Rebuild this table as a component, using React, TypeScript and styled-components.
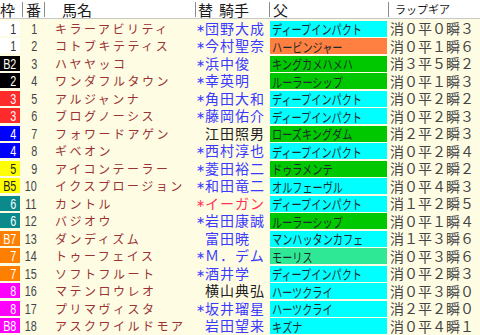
import React from 'react';
import styled, { createGlobalStyle } from 'styled-components';

const GlobalStyle = createGlobalStyle`
  html, body {
    margin: 0;
    padding: 0;
    background: #fffce4;
  }
`;

const COLS = '22px 22px 151px 74px 119px 92px';
const JP = `'Noto Sans CJK JP', 'Noto Sans', sans-serif`;

type Horse = {
  frame: string;
  waku: number;
  num: number;
  name: string;
  jockey: string;
  change: boolean;
  jockeyColor: 'blue' | 'black' | 'red';
  sire: string;
  sireColor: string;
  gear: string;
};

const wakuColors: Record<number, { bg: string; fg: string }> = {
  1: { bg: '#ffffff', fg: '#333333' },
  2: { bg: '#000000', fg: '#ffffff' },
  3: { bg: '#ff2a2a', fg: '#ffffff' },
  4: { bg: '#0000ff', fg: '#ffffff' },
  5: { bg: '#ffff00', fg: '#222222' },
  6: { bg: '#0a8a8a', fg: '#ffffff' },
  7: { bg: '#ff8000', fg: '#ffffff' },
  8: { bg: '#ff00ff', fg: '#ffffff' },
};

const CYAN = '#00ffff';
const GREEN = '#00c800';
const ORANGE = '#ff8040';
const MINT = '#2ee896';

const horses: Horse[] = [
  { frame: '1', waku: 1, num: 1, name: 'キラーアビリティ', jockey: '団野大成', change: true, jockeyColor: 'blue', sire: 'ディープインパクト', sireColor: CYAN, gear: '消０平０瞬３' },
  { frame: '1', waku: 1, num: 2, name: 'コトブキテティス', jockey: '今村聖奈', change: true, jockeyColor: 'blue', sire: 'ハービンジャー', sireColor: ORANGE, gear: '消０平１瞬６' },
  { frame: 'B2', waku: 2, num: 3, name: 'ハヤヤッコ', jockey: '浜中俊', change: true, jockeyColor: 'blue', sire: 'キングカメハメハ', sireColor: GREEN, gear: '消３平５瞬２' },
  { frame: '2', waku: 2, num: 4, name: 'ワンダフルタウン', jockey: '幸英明', change: true, jockeyColor: 'blue', sire: 'ルーラーシップ', sireColor: GREEN, gear: '消０平１瞬３' },
  { frame: '3', waku: 3, num: 5, name: 'アルジャンナ', jockey: '角田大和', change: true, jockeyColor: 'blue', sire: 'ディープインパクト', sireColor: CYAN, gear: '消０平２瞬２' },
  { frame: '3', waku: 3, num: 6, name: 'ブログノーシス', jockey: '藤岡佑介', change: true, jockeyColor: 'blue', sire: 'ディープインパクト', sireColor: CYAN, gear: '消０平２瞬３' },
  { frame: '4', waku: 4, num: 7, name: 'フォワードアゲン', jockey: '江田照男', change: false, jockeyColor: 'black', sire: 'ローズキングダム', sireColor: GREEN, gear: '消２平２瞬３' },
  { frame: '4', waku: 4, num: 8, name: 'ギベオン', jockey: '西村淳也', change: true, jockeyColor: 'blue', sire: 'ディープインパクト', sireColor: CYAN, gear: '消０平２瞬４' },
  { frame: '5', waku: 5, num: 9, name: 'アイコンテーラー', jockey: '菱田裕二', change: true, jockeyColor: 'blue', sire: 'ドゥラメンテ', sireColor: GREEN, gear: '消０平２瞬２' },
  { frame: 'B5', waku: 5, num: 10, name: 'イクスプロージョン', jockey: '和田竜二', change: true, jockeyColor: 'blue', sire: 'オルフェーヴル', sireColor: CYAN, gear: '消０平４瞬３' },
  { frame: '6', waku: 6, num: 11, name: 'カントル', jockey: 'イーガン', change: true, jockeyColor: 'red', sire: 'ディープインパクト', sireColor: CYAN, gear: '消１平２瞬５' },
  { frame: '6', waku: 6, num: 12, name: 'バジオウ', jockey: '岩田康誠', change: true, jockeyColor: 'blue', sire: 'ルーラーシップ', sireColor: GREEN, gear: '消０平１瞬４' },
  { frame: 'B7', waku: 7, num: 13, name: 'ダンディズム', jockey: '富田暁', change: false, jockeyColor: 'blue', sire: 'マンハッタンカフェ', sireColor: CYAN, gear: '消１平３瞬６' },
  { frame: '7', waku: 7, num: 14, name: 'トゥーフェイス', jockey: 'Ｍ．デム', change: true, jockeyColor: 'blue', sire: 'モーリス', sireColor: MINT, gear: '消０平３瞬６' },
  { frame: '7', waku: 7, num: 15, name: 'ソフトフルート', jockey: '酒井学', change: true, jockeyColor: 'blue', sire: 'ディープインパクト', sireColor: CYAN, gear: '消０平２瞬３' },
  { frame: '8', waku: 8, num: 16, name: 'マテンロウレオ', jockey: '横山典弘', change: false, jockeyColor: 'black', sire: 'ハーツクライ', sireColor: CYAN, gear: '消０平３瞬０' },
  { frame: '8', waku: 8, num: 17, name: 'プリマヴィスタ', jockey: '坂井瑠星', change: true, jockeyColor: 'blue', sire: 'ハーツクライ', sireColor: CYAN, gear: '消２平２瞬０' },
  { frame: 'B8', waku: 8, num: 18, name: 'アスクワイルドモア', jockey: '岩田望来', change: false, jockeyColor: 'blue', sire: 'キズナ', sireColor: CYAN, gear: '消０平４瞬１' },
];

const jockeyInk = { blue: '#3a3aff', black: '#222222', red: '#ff3355' };

const App = () => {
  return (
    <>
      <GlobalStyle />
      <Sheet>
        <Header>
          <HeadCell>枠</HeadCell>
          <HeadCell $sep $pad={3}>番</HeadCell>
          <HeadCell $sep $pad={17}>馬名</HeadCell>
          <HeadCell $sep $pad={2}>
            替<HeadGap />騎手
          </HeadCell>
          <HeadCell $sep $pad={3}>父</HeadCell>
          <HeadCell $sep $pad={6} $small>
            ラップギア
          </HeadCell>
        </Header>
        <Body>
          {horses.map((h) => (
            <Row key={h.num}>
              <WakuCell $bg={wakuColors[h.waku].bg} $fg={wakuColors[h.waku].fg}>
                <Narrow>{h.frame}</Narrow>
              </WakuCell>
              <NumCell>
                <Narrow>{h.num}</Narrow>
              </NumCell>
              <NameCell>{h.name}</NameCell>
              <JockeyCell $ink={jockeyInk[h.jockeyColor]}>
                <Star>{h.change ? '∗' : ''}</Star>
                <JockeyName>{h.jockey}</JockeyName>
              </JockeyCell>
              <SireCell $bg={h.sireColor}>
                <SireText>{h.sire}</SireText>
              </SireCell>
              <GearCell>{h.gear}</GearCell>
            </Row>
          ))}
        </Body>
      </Sheet>
    </>
  );
};

export default App;

const Sheet = styled.div`
  width: 480px;
  height: 335px;
  overflow: hidden;
  background: #fffce4;
  font-family: ${JP};
`;

const Header = styled.div`
  display: grid;
  grid-template-columns: ${COLS};
  height: 18px;
  background: #ffffff;
  border-bottom: 1px solid #c8c8c8;
`;

const HeadCell = styled.div<{ $sep?: boolean; $pad?: number; $small?: boolean }>`
  display: flex;
  align-items: center;
  margin: 2px 0 1px;
  padding-left: ${(p) => p.$pad ?? 0}px;
  border-left: ${(p) => (p.$sep ? '1px solid #8c8c8c' : 'none')};
  font-size: ${(p) => (p.$small ? '11px' : '15px')};
  line-height: 15px;
  color: #1a1a1a;
  white-space: nowrap;
`;

const HeadGap = styled.span`
  display: inline-block;
  width: 6px;
`;

const Body = styled.div`
  display: grid;
  grid-template-rows: repeat(18, 17.5px);
`;

const Row = styled.div`
  display: grid;
  grid-template-columns: ${COLS};
  padding: 1.5px 0 0;
  height: 17.5px;
  box-sizing: border-box;
`;

const WakuCell = styled.div<{ $bg: string; $fg: string }>`
  width: 20px;
  height: 15px;
  background: ${(p) => p.$bg};
  color: ${(p) => p.$fg};
  display: flex;
  align-items: center;
  justify-content: flex-end;
  padding-right: 4px;
  box-sizing: border-box;
  font-family: 'Liberation Sans', sans-serif;
  font-size: 15px;
`;

const Narrow = styled.span`
  display: inline-block;
  transform: scaleX(0.72);
  transform-origin: right center;
  line-height: 15px;
`;

const NumCell = styled.div`
  height: 15px;
  display: flex;
  align-items: center;
  justify-content: flex-end;
  padding-right: 7px;
  color: #444444;
  font-family: 'Liberation Sans', sans-serif;
  font-size: 15px;
`;

const NameCell = styled.div`
  height: 15px;
  display: flex;
  align-items: center;
  padding-left: 11px;
  color: #993333;
  font-size: 12px;
  letter-spacing: 2.5px;
  white-space: nowrap;
`;

const JockeyCell = styled.div<{ $ink: string }>`
  height: 15px;
  display: flex;
  align-items: center;
  padding-left: 1px;
  color: ${(p) => p.$ink};
  white-space: nowrap;
`;

const Star = styled.span`
  display: inline-block;
  width: 9px;
  flex: none;
  font-family: 'DejaVu Sans', sans-serif;
  font-size: 11px;
`;

const JockeyName = styled.span`
  font-size: 14px;
  letter-spacing: 1px;
  line-height: 15px;
`;

const SireCell = styled.div<{ $bg: string }>`
  height: 16px;
  margin: 0 1px;
  background: ${(p) => p.$bg};
  display: flex;
  align-items: center;
  padding-left: 2px;
`;

const SireText = styled.span`
  display: inline-block;
  font-size: 13px;
  line-height: 15px;
  color: #1c2a2a;
  white-space: nowrap;
  transform: scaleX(0.78);
  transform-origin: left center;
`;

const GearCell = styled.div`
  height: 15px;
  display: flex;
  align-items: center;
  padding-left: 2px;
  color: #444444;
  font-size: 14px;
  white-space: nowrap;
`;
